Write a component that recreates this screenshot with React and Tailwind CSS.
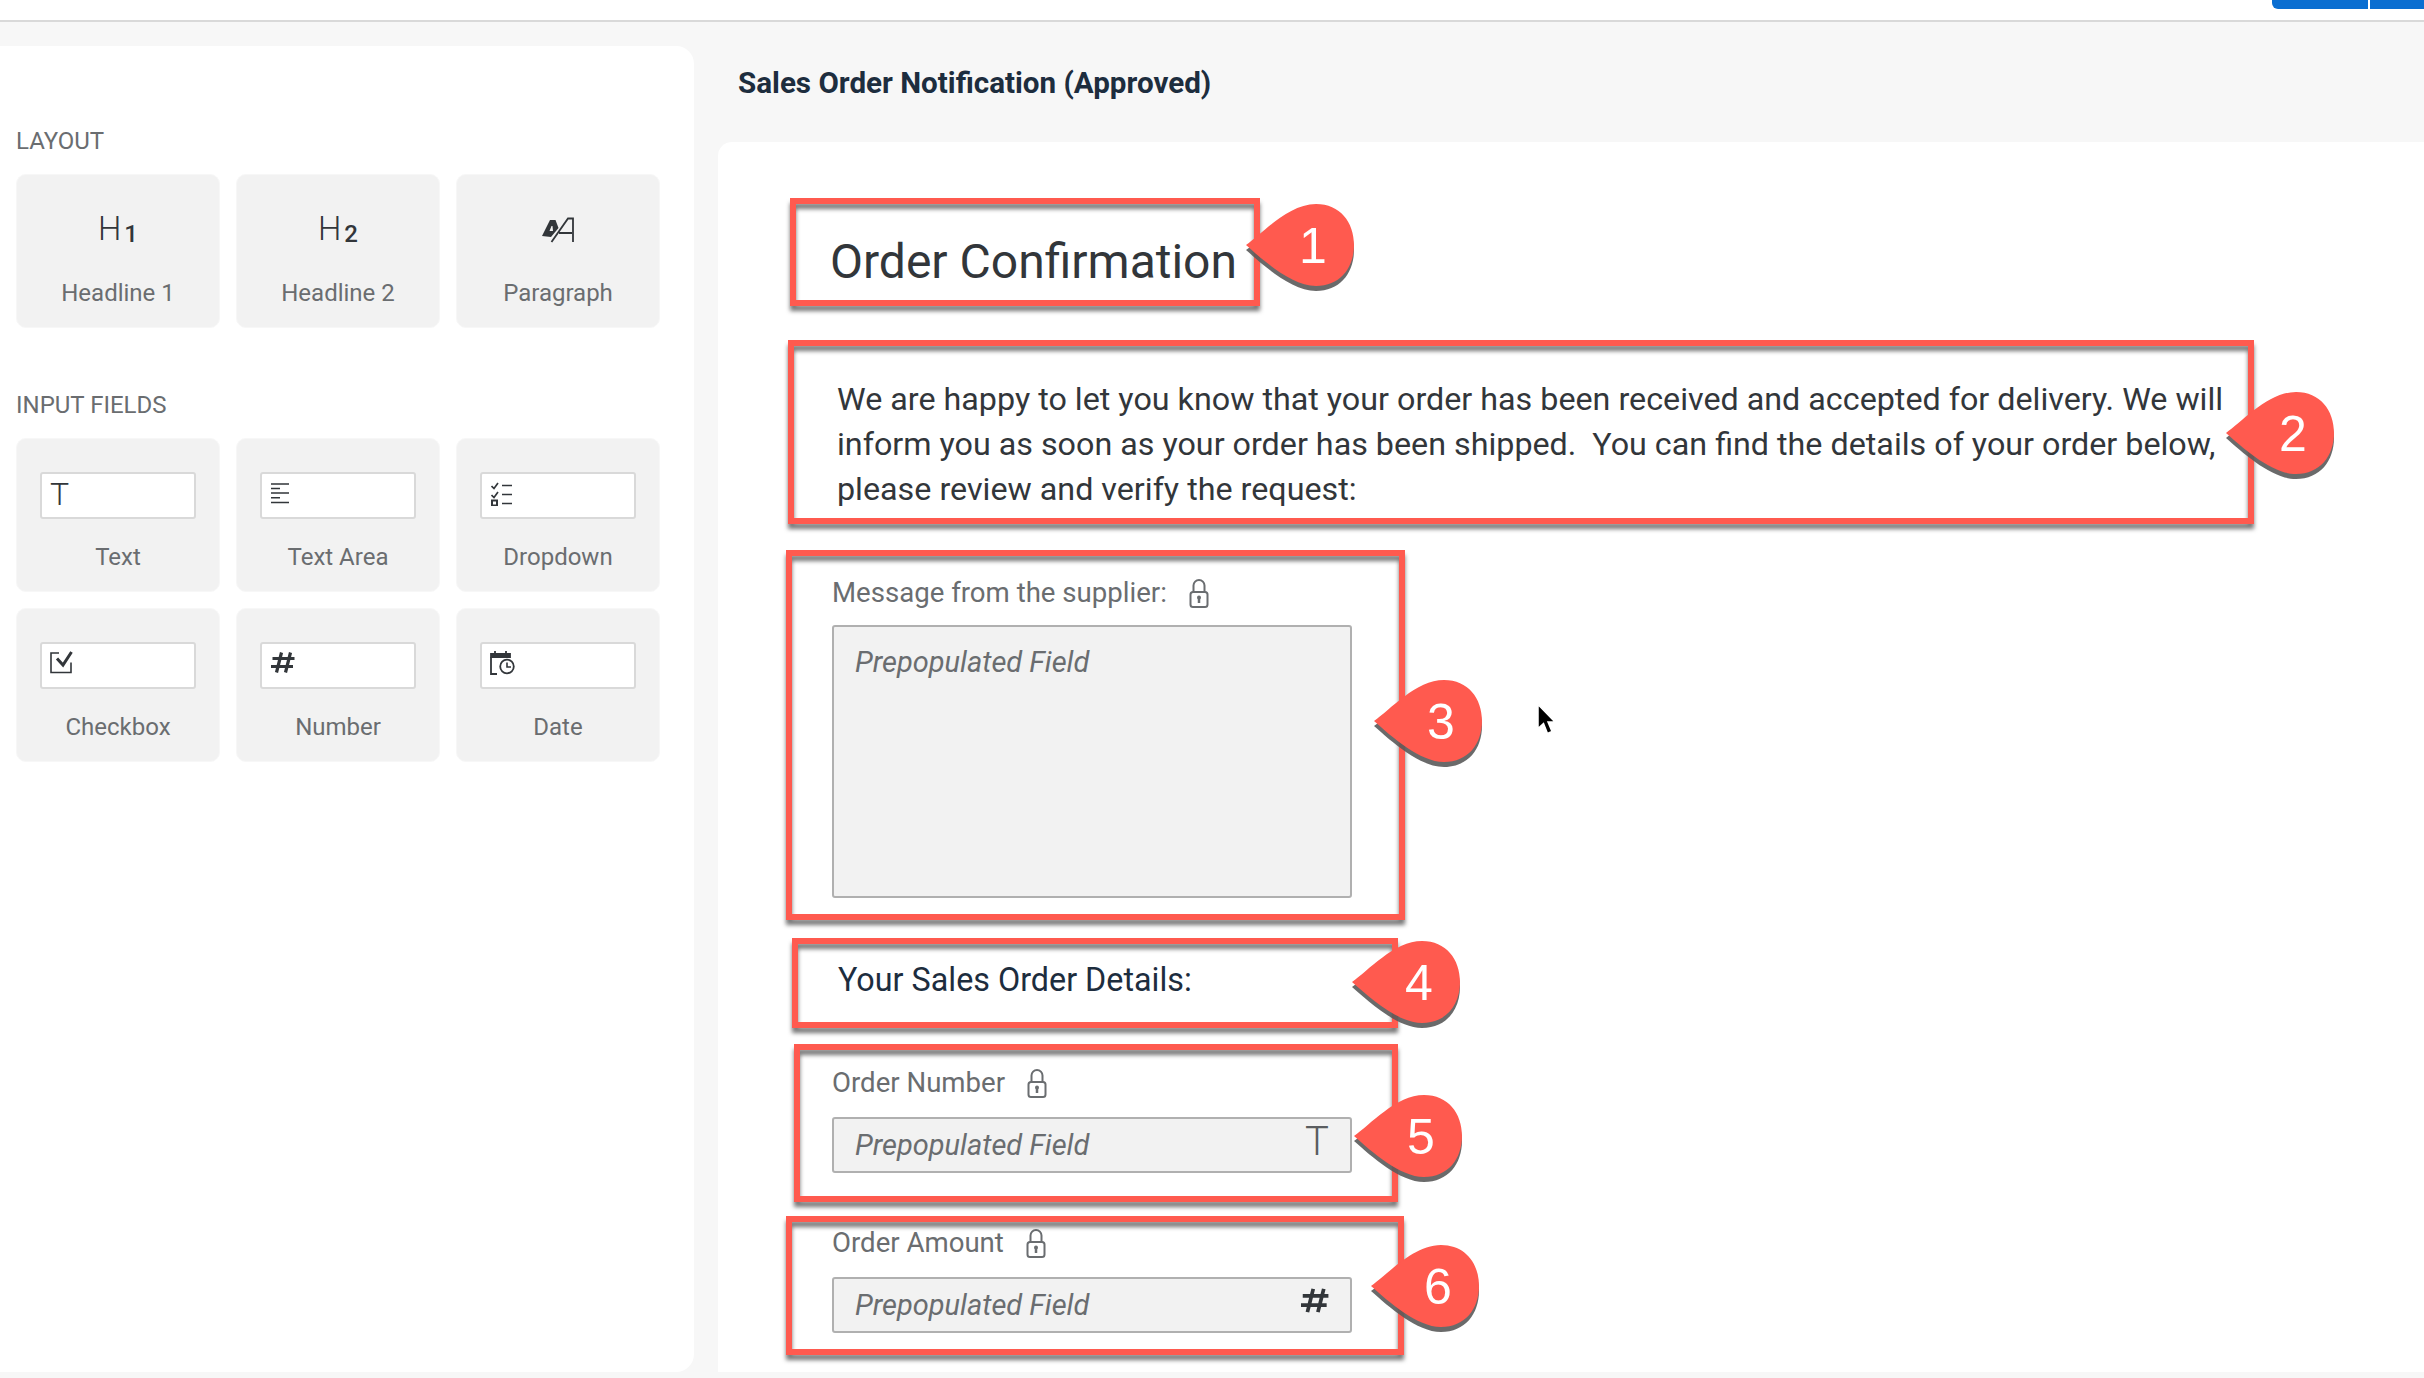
import React from 'react';

const Callout = ({ n, className }) => (
  <div className={`absolute w-[110px] h-[90px] ${className}`}>
    <svg width="110" height="90" viewBox="0 0 110 90" className="drop-shadow-[0_5px_0_rgba(90,90,90,0.9)]">
      <path d="M0 41C16 30 42 0 70 0C94 0 108 18 108 41C108 64 94 82 70 82C46 82 18 57 0 41Z" fill="#ff5a4f" />
    </svg>
    <span className="absolute left-[49px] top-[6px] w-[36px] text-center text-[50px] leading-[72px] text-white font-['Liberation_Sans',sans-serif]">{n}</span>
  </div>
);

const Lock = () => (
  <svg width="20" height="29" viewBox="0 0 20 29" fill="none" stroke="#6a6d70" strokeWidth="2">
    <path d="M4.5 13V6.5a5.5 5.5 0 0 1 11 0V13" />
    <rect x="1.5" y="13" width="17" height="15" rx="2.5" />
    <circle cx="10" cy="18.5" r="2" fill="#6a6d70" stroke="none" />
    <path d="M10 19v5" strokeWidth="2.5" />
  </svg>
);

const HashIcon = ({ w = 24, h = 21 }) => (
  <svg width={w} height={h} viewBox="0 0 24 21" fill="none" stroke="#32363a" strokeWidth="3.2">
    <path d="M10.5 0.5L5.5 20.5M19.5 0.5L14.5 20.5M1.5 6.5H23.5M0 14.5H22" />
  </svg>
);

const Headline = ({ level }) => (
  <div className="h-[47px] -mt-[3px] flex items-center text-[#32363a]">
    <span className="text-[33px] font-light leading-none">H</span>
    <sub className="text-[24px] font-medium leading-none mt-[11px] ml-[3px] bottom-0 top-auto">{level}</sub>
  </div>
);

const ParagraphIcon = () => (
  <svg width="32" height="26" viewBox="0 0 32 26" className="mt-[9px]" fill="none">
    <path d="M0 19L8 3H13.5L16.5 11L9 20ZM7.5 14H11L10.5 9H9.5Z" fill="#32363a" fillRule="evenodd" />
    <path d="M9.5 25L26 1.5H31V25M17 16H30" stroke="#32363a" strokeWidth="1.8" />
  </svg>
);

const FieldPreview = ({ children }) => (
  <div className="w-[156px] h-[47px] bg-white border-2 border-[#d9d9d9] rounded-[3px] flex pl-[9px] pt-[8px] items-start">
    {children}
  </div>
);

const TextIcon = () => (
  <span className="text-[32px] leading-[26px] font-light -mt-[1px] -ml-[1px] text-[#32363a]">T</span>
);

const TextAreaIcon = () => (
  <svg width="19" height="21" viewBox="0 0 19 21" stroke="#32363a" strokeWidth="1.5" className="mt-[1px]">
    <path d="M0 1H18M0 5.5H9M0 10H18M0 14.7H9M0 19.5H18" />
  </svg>
);

const DropdownIcon = () => (
  <svg width="22" height="24" viewBox="0 0 22 24" fill="none" stroke="#32363a">
    <path d="M0.5 4L3 6.5L7 1M0.5 13L3 15.5L7 10" strokeWidth="1.7" />
    <path d="M11 3.5H21M11 12.5H21M11 21.5H21" strokeWidth="1.6" />
    <rect x="1" y="18.5" width="5" height="5" strokeWidth="2" />
  </svg>
);

const CheckIcon = () => (
  <svg width="23" height="23" viewBox="0 0 23 23" fill="none" stroke="#32363a" className="-mt-[1px] -ml-[1px]">
    <path d="M9 2H1V21.5H21V11.5" strokeWidth="1.6" />
    <path d="M7 7.5L13 14L21.5 1" strokeWidth="3" />
  </svg>
);

const DateIcon = () => (
  <svg width="25" height="25" viewBox="0 0 25 25" fill="none" stroke="#32363a" className="-mt-[2px] -ml-[1px]">
    <path d="M1 4H20V7H1ZM5 1V4M16 1V4" strokeWidth="1.8" fill="#32363a" />
    <path d="M1 7V24H7" strokeWidth="1.8" />
    <circle cx="17" cy="16.5" r="6.8" strokeWidth="1.8" fill="white" />
    <path d="M17 12.5V17H21" strokeWidth="1.6" />
  </svg>
);

const Card = ({ children, label }) => (
  <div className="h-[154px] bg-[#f2f2f2] border border-[#f7f7f7] rounded-[10px] flex flex-col items-center">
    <div className="h-[103px] pt-[33px] flex justify-center">{children}</div>
    <span className="text-[24px] leading-[30px] text-[#6a6d70]">{label}</span>
  </div>
);

const Annotated = ({ className, n, calloutClass, children }) => (
  <div className={`relative shrink-0 ${className}`}>
    {children}
    <div className="absolute inset-0 border-[6px] border-[#ff5a4f] drop-shadow-[0_5px_2px_rgba(60,60,60,0.7)] pointer-events-none"></div>
    <Callout n={n} className={calloutClass} />
  </div>
);

const FieldLabel = ({ children }) => (
  <div className="flex items-center gap-[22px] h-[30px] text-[27.6px] leading-[30px] text-[#6a6d70]">
    <span>{children}</span>
    <Lock />
  </div>
);

const Prepopulated = ({ icon }) => (
  <div className="relative w-[520px] h-[56px] mt-[19px] pt-[2px] bg-[#f2f2f2] border-2 border-[#b0b0b0] rounded-[3px] flex items-center pl-[21px] text-[29px] italic text-[#6a6d70]">
    Prepopulated Field
    {icon}
  </div>
);

const App = () => {
  return (
    <div className="w-full h-[1378px] bg-[#f7f7f7] flex flex-col overflow-hidden font-['Roboto',sans-serif]">
      <header className="h-[22px] shrink-0 bg-white border-b-2 border-[#d9d9d9] flex justify-end items-start gap-[2px]">
        <div className="w-[96px] h-[9px] bg-[#0a6ed1] rounded-bl-[6px]"></div>
        <div className="w-[54px] h-[9px] bg-[#0a6ed1]"></div>
      </header>

      <div className="flex flex-1 pb-[6px]">
        {/* palette */}
        <aside className="w-[694px] mt-[24px] bg-white rounded-r-[18px] pl-[16px] pr-[34px] pt-[80px]">
          <div className="h-[30px] text-[24px] leading-[30px] text-[#6a6d70] mb-[18px]">LAYOUT</div>
          <div className="grid grid-cols-3 gap-4">
            <Card label="Headline 1"><Headline level="1" /></Card>
            <Card label="Headline 2"><Headline level="2" /></Card>
            <Card label="Paragraph"><ParagraphIcon /></Card>
          </div>

          <div className="h-[30px] text-[24px] leading-[30px] text-[#6a6d70] mt-[62px] mb-[18px]">INPUT FIELDS</div>
          <div className="grid grid-cols-3 gap-4">
            <Card label="Text"><FieldPreview><TextIcon /></FieldPreview></Card>
            <Card label="Text Area"><FieldPreview><TextAreaIcon /></FieldPreview></Card>
            <Card label="Dropdown"><FieldPreview><DropdownIcon /></FieldPreview></Card>
            <Card label="Checkbox"><FieldPreview><CheckIcon /></FieldPreview></Card>
            <Card label="Number"><FieldPreview><HashIcon /></FieldPreview></Card>
            <Card label="Date"><FieldPreview><DateIcon /></FieldPreview></Card>
          </div>
        </aside>

        <main className="flex-1 ml-[24px] flex flex-col">
          <div className="h-[120px] shrink-0 flex items-center pl-[20px] pt-[2px] text-[29.6px] font-bold text-[#1d2d3e]">
            Sales Order Notification (Approved)
          </div>

          <section className="relative flex-1 bg-white rounded-tl-[14px] flex flex-col pt-[56px]">
            <Annotated className="ml-[72px] w-[470px] h-[108px] flex items-center pl-[40px] pt-[20px]" n="1" calloutClass="left-[456px] top-[6px]">
              <h1 className="text-[48px] leading-none text-[#32363a]">Order Confirmation</h1>
            </Annotated>

            <Annotated className="ml-[70px] mt-[34px] w-[1466px] h-[184px] pl-[49px] pt-[37px]" n="2" calloutClass="left-[1438px] top-[52px]">
              <p className="text-[32.27px] leading-[45px] text-[#32363a] whitespace-pre">
                We are happy to let you know that your order has been received and accepted for delivery. We will{'\n'}
                inform you as soon as your order has been shipped.  You can find the details of your order below,{'\n'}
                please review and verify the request:
              </p>
            </Annotated>

            <Annotated className="ml-[68px] mt-[26px] w-[619px] h-[370px] pl-[46px] pt-[28px]" n="3" calloutClass="left-[588px] top-[130px]">
              <FieldLabel>Message from the supplier:</FieldLabel>
              <div className="w-[520px] h-[273px] mt-[17px] bg-[#f2f2f2] border-2 border-[#b0b0b0] rounded-[3px] pl-[21px] pt-[15px] text-[29px] leading-[40px] italic text-[#6a6d70]">
                Prepopulated Field
              </div>
            </Annotated>

            <Annotated className="ml-[74px] mt-[18px] w-[606px] h-[90px] pl-[46px] pt-[24px]" n="4" calloutClass="left-[560px] top-[3px]">
              <div className="text-[32.3px] leading-[36px] text-[#1d2d3e]">Your Sales Order Details:</div>
            </Annotated>

            <Annotated className="ml-[76px] mt-[16px] w-[604px] h-[158px] pl-[38px] pt-[24px]" n="5" calloutClass="left-[560px] top-[51px]">
              <FieldLabel>Order Number</FieldLabel>
              <Prepopulated icon={<span className="absolute right-[21px] top-[1px] text-[40px] leading-[44px] font-light text-[#5a5d60] not-italic">T</span>} />
            </Annotated>

            <Annotated className="ml-[68px] mt-[14px] w-[618px] h-[139px] pl-[46px] pt-[12px]" n="6" calloutClass="left-[585px] top-[29px]">
              <FieldLabel>Order Amount</FieldLabel>
              <Prepopulated icon={<span className="absolute right-[21px] top-[9px]"><HashIcon w={28} h={25} /></span>} />
            </Annotated>

            {/* mouse pointer from the screen capture */}
            <svg width="20" height="35" viewBox="0 0 20 32" className="absolute left-[818px] top-[560px]">
              <path d="M2 1V25L7.5 20L11.5 30L16 28L12 18.5H19Z" fill="black" stroke="white" strokeWidth="1.5" />
            </svg>
          </section>
        </main>
      </div>
    </div>
  );
};

export default App;
